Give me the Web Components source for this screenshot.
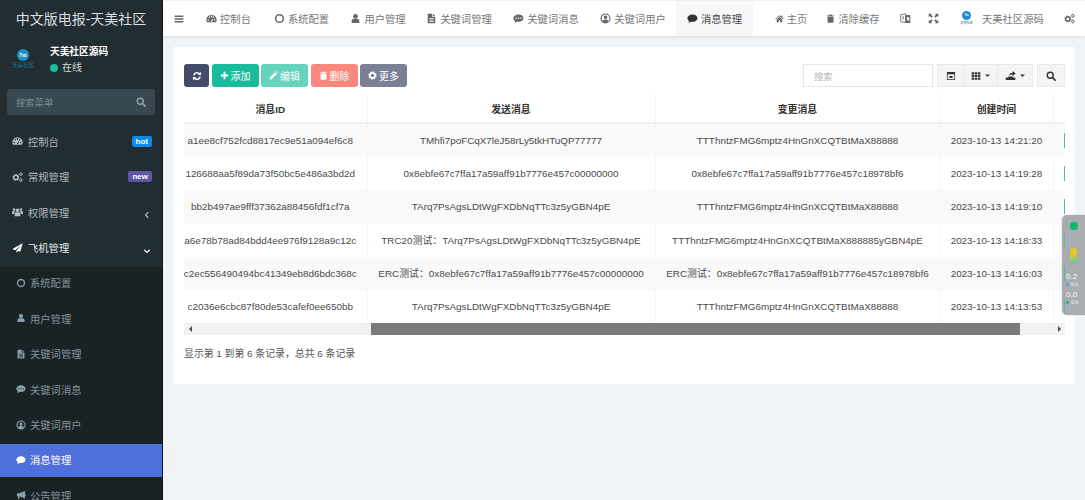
<!DOCTYPE html>
<html lang="zh">
<head>
<meta charset="utf-8">
<title>消息管理</title>
<style>
  html, body { margin: 0; height: 100%; overflow: hidden; }
  body {
    font-family: "Liberation Sans", "Noto Sans CJK SC", sans-serif;
    font-size: 10.3px;
    background: #f1f4f6;
    display: grid;
    grid-template-columns: 163px 1fr;
    height: 500px;
  }
  main-area { min-width: 0; }
</style>
</head>
<body>
<app-sidebar></app-sidebar>
<main-area></main-area>
<net-widget></net-widget>

<script>
const gear = (x, y, r, c = 'currentColor') => {
  const t = r * 0.42
  const len = 2 * Math.PI * (r - t / 2)
  return `<circle cx="${x}" cy="${y}" r="${r * 0.62}" fill="none" stroke="${c}" stroke-width="${r * 0.42}"/>
    <circle cx="${x}" cy="${y}" r="${r - t / 2}" fill="none" stroke="${c}" stroke-width="${t}" stroke-dasharray="${len / 16} ${len / 16}"/>`
}

const icons = {
  dashboard: '<path fill-rule="evenodd" d="M8 2.5a7.5 7.5 0 0 0-7.5 7.5c0 1.4.4 2.6 1 3.5h13c.6-.9 1-2.1 1-3.5A7.5 7.5 0 0 0 8 2.5zM3.2 9a1 1 0 1 0 .01 0zM5 5a1 1 0 1 0 .01 0zM8 3.8a1 1 0 1 0 .01 0zM12.8 9a1 1 0 1 0 .01 0zM11 5a1 1 0 1 0 .01 0zM7 11.5a1.2 1.2 0 0 0 2.2.5l1.6-5.5-2.6 4.1a1.2 1.2 0 0 0-1.2.9z"/>',
  cogs: gear(5.6, 8.6, 5) + gear(12.8, 4, 2.8) + gear(12.8, 12.4, 2.8),
  group: '<circle cx="8" cy="5.6" r="2.6"/><path d="M3.8 14V10.6c0-1.6 1.2-2.3 2.2-2.3h4c1 0 2.2.7 2.2 2.3V14z"/><circle cx="3" cy="4.4" r="1.9"/><circle cx="13" cy="4.4" r="1.9"/><path d="M0 11V8.4C0 7 1 6.6 1.8 6.6h2.4c.2 1-.1 1.3-1 2.4V11zM16 11V8.4C16 7 15 6.6 14.2 6.6h-2.4c-.2 1 .1 1.3 1 2.4V11z"/>',
  send: '<path d="M15.5 1 .5 9.4l4.2 1.7L13 4 6.4 12v3l2.4-2.8 3.3 1.4z"/>',
  circle: '<circle cx="8" cy="8" r="5.6" fill="none" stroke="currentColor" stroke-width="2.2"/>',
  user: '<circle cx="8" cy="4.8" r="3.4"/><path d="M2.4 14.5v-3c0-2 1.4-3.3 3-3.3h5.2c1.6 0 3 1.3 3 3.3v3z"/>',
  file: '<path fill-rule="evenodd" d="M2.5 1H9v4.5h4.5V15h-11zM10 1.2 13.3 4.5H10zM4.8 7.6v1h6.4v-1zM4.8 9.8v1h6.4v-1zM4.8 12v1h6.4v-1z"/>',
  commenting: '<path fill-rule="evenodd" d="M8 2C3.9 2 .6 4.5.6 7.6c0 1.7 1 3.2 2.5 4.2-.2.9-.7 1.7-1.3 2.4 1.3-.1 2.7-.7 3.7-1.6.7.2 1.5.3 2.3.3 4.1 0 7.4-2.2 7.4-5.3S12.1 2 8 2zM4.5 6.6a1 1 0 1 0 .01 0zM8 6.6a1 1 0 1 0 .01 0zM11.5 6.6a1 1 0 1 0 .01 0z"/>',
  comment: '<path d="M8 2C3.9 2 .6 4.5.6 7.6c0 1.7 1 3.2 2.5 4.2-.2.9-.7 1.7-1.3 2.4 1.3-.1 2.7-.7 3.7-1.6.7.2 1.5.3 2.3.3 4.1 0 7.4-2.2 7.4-5.3S12.1 2 8 2z"/>',
  usercircle: '<circle cx="8" cy="8" r="6.5" fill="none" stroke="currentColor" stroke-width="1.7"/><circle cx="8" cy="6.3" r="2.5"/><path d="M3.5 12.5c.4-2.3 2-3.2 4.5-3.2s4.1.9 4.5 3.2C11.3 13.8 9.8 14.5 8 14.5s-3.3-.7-4.5-2z"/>',
  bullhorn: '<path d="M14.5 1.5 5 5H1.5v5H3l1 4.5h2L5.2 10l9.3 3.5zM15 6v3.5c.8-.3 1-1 1-1.7S15.8 6.3 15 6z"/>',
  refresh: '<path fill="none" stroke="currentColor" stroke-width="2.3" d="M2.8 7a5.4 5.4 0 0 1 9.5-2.2M13.2 9a5.4 5.4 0 0 1-9.5 2.2"/><path d="M14.5 1.2v5.3H9.3zM1.5 14.8V9.5h5.2z"/>',
  plus: '<path d="M6.3 1.5h3.4v4.8h4.8v3.4H9.7v4.8H6.3V9.7H1.5V6.3h4.8z"/>',
  pencil: '<path d="M1 15l1-4.3L10.8 2l3.2 3.2L5.3 14zM11.8 1l.7-.4c.5-.3 1-.2 1.4.2l1.3 1.3c.4.4.4 1 .1 1.4l-.4.6z"/>',
  trash: '<path d="M6 1h4l.7 1.5H14.5V4.2h-13V2.5h3.8zM2.7 5h10.6v9.2c0 .8-.6 1.3-1.3 1.3H4c-.7 0-1.3-.5-1.3-1.3z"/>',
  cog: gear(8, 8, 7.4),
  bars: '<path d="M1 2.5h14v2.2H1zM1 6.9h14v2.2H1zM1 11.3h14v2.2H1z"/>',
  home: '<path d="M8 2 .5 8.4l.9 1L8 3.9l6.6 5.5.9-1L13 6.3V2.5h-2v2.1zM3 9.7V14.5h3.8v-3.5h2.4v3.5H13V9.7L8 5.5z"/>',
  language: '<path d="M1 2.5 8 1v13L1 12.5z" fill="none" stroke="currentColor" stroke-width="1.2"/><path d="M8 3h7v11.5H8z"/><path d="M10 6h3.4v5H10z" fill="#fff"/><path d="M3 6h3M4.5 5v5" stroke="currentColor"/>',
  arrows: '<path d="M1 1h5L4.4 2.6 6.9 5.1 5.1 6.9 2.6 4.4 1 6zM15 1v5L13.4 4.4 10.9 6.9 9.1 5.1 11.6 2.6 10 1zM1 15v-5L2.6 11.6 5.1 9.1 6.9 10.9 4.4 13.4 6 15zM15 15h-5L11.6 13.4 9.1 10.9 10.9 9.1 13.4 11.6 15 10z"/>',
  search: '<circle cx="6.8" cy="6.8" r="4.8" fill="none" stroke="currentColor" stroke-width="2.2"/><path d="M10.2 10.2l4.3 4.3" stroke="currentColor" stroke-width="2.6" stroke-linecap="round"/>',
  table: '<path fill-rule="evenodd" d="M1.5 1.5h13v13h-13zM2.7 5v8.3h10.6V5zM5.5 8h5v3h-5z"/>',
  th: '<path d="M1 2h4v3.4H1zM6 2h4v3.4H6zM11 2h4v3.4h-4zM1 6.3h4v3.4H1zM6 6.3h4v3.4H6zM11 6.3h4v3.4h-4zM1 10.6h4V14H1zM6 10.6h4V14H6zM11 10.6h4V14h-4z"/>',
  export: '<path d="M1 11h3l1.200-1.500h5.600L12 11h3v3.500H1zM6 8.500c0-3 2-4.500 5-4.500V1.500l4.500 3.700L11 9V6.500c-2.200 0-3.800.6-5 2z"/>',
  caret: '<path d="M2.5 5.5h11L8 11.5z"/>',
  left: '<path d="M10.5 2.5 5 8l5.5 5.5" fill="none" stroke="currentColor" stroke-width="2.2"/>',
  down: '<path d="M2.5 5.5 8 11l5.5-5.5" fill="none" stroke="currentColor" stroke-width="2.2"/>'
}

// small icon, size comes from the size attribute
class FaIcon extends HTMLElement {
  constructor(){
    super()
    const size = this.getAttribute('size') || 11
    this.attachShadow({ mode: 'open' })
    this.shadowRoot.innerHTML = `
      <style>:host{display:inline-flex;flex:none;align-items:center;justify-content:center} svg{display:block;fill:currentColor}</style>
      <svg width="${size}" height="${size}" viewBox="0 0 16 16">${icons[this.getAttribute('name')] || ''}</svg>`
  }
}
customElements.define('fa-icon', FaIcon)

// the round logo, used twice
class BrandLogo extends HTMLElement {
  constructor(){
    super()
    const small = this.hasAttribute('small')
    this.attachShadow({ mode: 'open' })
    this.shadowRoot.innerHTML = `
      <style>
        :host{display:inline-flex;flex-direction:column;align-items:center;flex:none}
        .c{width:${small ? 9 : 12}px;height:${small ? 9 : 12}px;border-radius:50%;background:#1f8fc4;color:#fff;
           font-size:${small ? 3 : 5}px;font-weight:700;display:flex;align-items:center;justify-content:center;line-height:1}
        .t{font-size:${small ? 3.2 : 5.5}px;line-height:1;margin-top:2px;color:#1c6f93;white-space:nowrap}
      </style>
      <div class="c">7m</div><div class="t">天美社区</div>`
  }
}
customElements.define('brand-logo', BrandLogo)

const sideTpl = document.createElement('template')
sideTpl.innerHTML = `
<style>
  :host { display:block; height:500px; overflow:hidden; background:#222d32; color:#b4bfc4; border-right:1px solid #0f1518; box-sizing:border-box; }
  .title { height:36px; display:flex; align-items:center; justify-content:center; color:#d9dee0; font-size:14px; }
  .user { height:53px; display:flex; }
  .user .logo { width:50px; padding-right:4px; box-sizing:border-box; display:flex; justify-content:center; padding-top:13px; }
  .user .info { padding-top:9px; color:#fff; }
  .user b { display:block; font-size:9.7px; line-height:13px; }
  .online { display:flex; align-items:center; gap:4px; margin-top:3px; font-size:10px; line-height:13px; color:#d4dadc; }
  .online i { width:8px; height:8px; border-radius:50%; background:#18bc9c; }
  .search { margin:0 7px; height:26px; border-radius:3px; background:#374850; color:#7d8d94; display:flex; align-items:center; justify-content:space-between; padding:0 9px; font-size:9.3px; }
  .search fa-icon { color:#93a2a8; }
  .menu { margin-top:10.9px; }
  .sub { background:#1a2226; }
</style>
<div class="title">中文版电报-天美社区</div>
<div class="user">
  <div class="logo"><brand-logo></brand-logo></div>
  <div class="info"><b>天美社区源码</b><div class="online"><i></i>在线</div></div>
</div>
<div class="search"><span>搜索菜单</span><fa-icon name="search" size="10"></fa-icon></div>
<div class="menu">
  <side-item icon="dashboard" badge="hot" badge-color="#0e8ae8">控制台</side-item>
  <side-item icon="cogs" badge="new" badge-color="#5f56a6">常规管理</side-item>
  <side-item icon="group" arrow="left">权限管理</side-item>
  <side-item icon="send" arrow="down" strong>飞机管理</side-item>
  <div class="sub">
    <side-item sub icon="circle">系统配置</side-item>
    <side-item sub icon="user">用户管理</side-item>
    <side-item sub icon="file">关键词管理</side-item>
    <side-item sub icon="commenting">关键词消息</side-item>
    <side-item sub icon="usercircle">关键词用户</side-item>
    <side-item sub icon="comment" active>消息管理</side-item>
    <side-item sub icon="bullhorn">公告管理</side-item>
  </div>
</div>`

class AppSidebar extends HTMLElement {
  constructor(){
    super()
    this.attachShadow({ mode: 'open' })
    this.shadowRoot.appendChild(sideTpl.content.cloneNode(true))
  }
}

class SideItem extends HTMLElement {
  constructor(){
    super()
    this.attachShadow({ mode: 'open' })
    const sub = this.hasAttribute('sub')
    const badge = this.getAttribute('badge')
    const arrow = this.getAttribute('arrow')
    const strong = this.hasAttribute('strong')
    const active = this.hasAttribute('active')
    this.shadowRoot.innerHTML = `
      <style>
        :host { display:block; height:35.4px; }
        a { height:33px; padding:0 10px 2px ${sub ? 15 : 12}px; box-sizing:border-box; display:flex; align-items:center; gap:${sub ? 4 : 5}px;
            color:${active ? '#fff' : strong ? '#e4e9eb' : sub ? '#84929a' : '#aeb9be'}; background:${active ? '#4e6fdc' : 'none'}; }
        fa-icon { width:11px; color:${active ? '#fff' : sub ? '#8aa0aa' : strong ? '#fff' : '#b4bfc4'}; }
        fa-icon.arrow { margin-top:6px; }
        .txt { flex:1; white-space:nowrap; }
        .badge { color:#fff; font-size:8px; font-weight:700; line-height:11px; padding:0 4px; border-radius:2px; }
      </style>
      <a>
        <fa-icon name="${this.getAttribute('icon')}" size="${sub ? 10 : 12}"></fa-icon>
        <span class="txt"><slot></slot></span>
        ${badge ? `<span class="badge" style="background:${this.getAttribute('badge-color')}">${badge}</span>` : ''}
        ${arrow ? `<fa-icon class="arrow" name="${arrow}" size="8"></fa-icon>` : ''}
      </a>`
  }
}

const mainTpl = document.createElement('template')
mainTpl.innerHTML = `
<style>
  :host { display:block; height:500px; }
  .top { height:36px; background:#fff; border-top:1px solid #eef0f2; box-sizing:border-box; box-shadow:0 1px 3px rgba(0,0,0,.1); display:flex; align-items:stretch; }
  .ham { width:31px; display:flex; align-items:center; justify-content:center; color:#666; }
  .links { display:flex; flex:1; }
  .right { display:flex; padding-right:4px; }
  .panel { margin:11px 10px 0; height:337px; background:#fff; padding:17px 10px 0 11px; box-sizing:border-box; }
</style>
<div class="top">
  <div class="ham"><fa-icon name="bars" size="10"></fa-icon></div>
  <div class="links">
    <nav-link icon="dashboard" w="69">控制台</nav-link>
    <nav-link icon="circle" w="77">系统配置</nav-link>
    <nav-link icon="user" w="76">用户管理</nav-link>
    <nav-link icon="file" w="86">关键词管理</nav-link>
    <nav-link icon="commenting" w="88">关键词消息</nav-link>
    <nav-link icon="usercircle" w="86">关键词用户</nav-link>
    <nav-link icon="comment" w="77" current>消息管理</nav-link>
  </div>
  <div class="right">
    <nav-link icon="home" size="9" w="66">主页</nav-link>
    <nav-link icon="trash" size="9" w="58">清除缓存</nav-link>
    <nav-link icon="language" w="28" style="margin-left:9px"></nav-link>
    <nav-link icon="arrows" w="28"></nav-link>
    <nav-link logo w="110">天美社区源码</nav-link>
    <nav-link icon="cogs" w="24"></nav-link>
  </div>
</div>
<div class="panel">
  <tool-bar></tool-bar>
  <msg-table></msg-table>
</div>`

class MainArea extends HTMLElement {
  constructor(){
    super()
    this.attachShadow({ mode: 'open' })
    this.shadowRoot.appendChild(mainTpl.content.cloneNode(true))
  }
}

class NavLink extends HTMLElement {
  constructor(){
    super()
    this.attachShadow({ mode: 'open' })
    const cur = this.hasAttribute('current')
    const logo = this.hasAttribute('logo')
    const size = this.getAttribute('size') || 11
    this.shadowRoot.innerHTML = `
      <style>
        :host { display:flex; align-items:center; justify-content:center; gap:${logo ? 9 : 3}px; width:${this.getAttribute('w')}px; flex:none;
                color:${cur ? '#444' : '#777'}; background:${cur ? '#f7f7f7' : 'none'}; white-space:nowrap; }
        fa-icon { color:${cur ? '#333' : '#666'}; }
      </style>
      ${logo ? '<brand-logo small></brand-logo>' : `<fa-icon name="${this.getAttribute('icon')}" size="${size}"></fa-icon>`}
      <slot></slot>`
  }
}

const barTpl = document.createElement('template')
barTpl.innerHTML = `
<style>
  :host { display:flex; height:23px; align-items:stretch; }
  .btn { display:flex; align-items:center; justify-content:center; gap:2px; width:47px; margin-right:2.5px; border-radius:3px; color:#fff; font-size:10px; }
  .ref { width:25px; background:#444c69; }
  .add { background:#18bc9c; }
  .edit { background:#66d3bd; }
  .del { background:#f8877d; }
  .more { background:#7b8096; margin-right:0; }
  .grow { flex:1; }
  .input { width:130px; border:1px solid #e6e6e6; box-sizing:border-box; color:#b5b5b5; font-size:9.3px; display:flex; align-items:center; padding-left:10px; margin-right:4px; }
  .grp { display:flex; margin-right:4px; }
  .gb { display:flex; align-items:center; justify-content:center; gap:3px; background:#f4f4f4; border:1px solid #eaeaea; box-sizing:border-box; color:#333; }
  .gb + .gb { border-left:0; }
</style>
<div class="btn ref"><fa-icon name="refresh" size="10"></fa-icon></div>
<div class="btn add"><fa-icon name="plus" size="9"></fa-icon>添加</div>
<div class="btn edit"><fa-icon name="pencil" size="9"></fa-icon>编辑</div>
<div class="btn del"><fa-icon name="trash" size="9"></fa-icon>删除</div>
<div class="btn more"><fa-icon name="cog" size="9"></fa-icon>更多</div>
<div class="grow"></div>
<div class="input">搜索</div>
<div class="grp">
  <div class="gb" style="width:27px"><fa-icon name="table" size="10"></fa-icon></div>
  <div class="gb" style="width:34px"><fa-icon name="th" size="10"></fa-icon><fa-icon name="caret" size="7"></fa-icon></div>
  <div class="gb" style="width:35px"><fa-icon name="export" size="11"></fa-icon><fa-icon name="caret" size="7"></fa-icon></div>
</div>
<div class="gb" style="width:28px"><fa-icon name="search" size="10"></fa-icon></div>`

class ToolBar extends HTMLElement {
  constructor(){
    super()
    this.attachShadow({ mode: 'open' })
    this.shadowRoot.appendChild(barTpl.content.cloneNode(true))
  }
}

const rows = [
  ['a1ee8cf752fcd8817ec9e51a094ef6c8', 'TMhfi7poFCqX7leJ58rLy5tkHTuQP77777', 'TTThntzFMG6mptz4HnGnXCQTBtMaX88888', '2023-10-13 14:21:20'],
  ['126688aa5f89da73f50bc5e486a3bd2d', '0x8ebfe67c7ffa17a59aff91b7776e457c00000000', '0x8ebfe67c7ffa17a59aff91b7776e457c18978bf6', '2023-10-13 14:19:28'],
  ['bb2b497ae9fff37362a88456fdf1cf7a', 'TArq7PsAgsLDtWgFXDbNqTTc3z5yGBN4pE', 'TTThntzFMG6mptz4HnGnXCQTBtMaX88888', '2023-10-13 14:19:10'],
  ['a6e78b78ad84bdd4ee976f9128a9c12c', 'TRC20测试：TArq7PsAgsLDtWgFXDbNqTTc3z5yGBN4pE', 'TTThntzFMG6mptz4HnGnXCQTBtMaX888885yGBN4pE', '2023-10-13 14:18:33'],
  ['c2ec556490494bc41349eb8d6bdc368c', 'ERC测试：0x8ebfe67c7ffa17a59aff91b7776e457c00000000', 'ERC测试：0x8ebfe67c7ffa17a59aff91b7776e457c18978bf6', '2023-10-13 14:16:03'],
  ['c2036e6cbc87f80de53cafef0ee650bb', 'TArq7PsAgsLDtWgFXDbNqTTc3z5yGBN4pE', 'TTThntzFMG6mptz4HnGnXCQTBtMaX88888', '2023-10-13 14:13:53']
]

class MsgTable extends HTMLElement {
  constructor(){
    super()
    this.attachShadow({ mode: 'open' })
    const body = rows.map(r => `<tr>${r.map(c => `<td>${c}</td>`).join('')}<td class="op"><i></i></td></tr>`).join('')
    this.shadowRoot.innerHTML = `
      <style>
        :host { display:block; margin-top:8px; color:#333; }
        .clip { overflow:hidden; }
        table { border-collapse:collapse; table-layout:fixed; width:1080px; margin-left:-10px; font-size:9.9px; }
        th { height:27px; padding:0; font-weight:700; border-bottom:2px solid #f1f1f1; border-right:1px solid #f4f4f4; color:#333; }
        td { height:33.2px; padding:0; text-align:center; white-space:nowrap; border-right:1px solid #f6f6f6; color:#4a4a4a; }
        tr:nth-child(odd) td { background:#f9f9f9; }
        .op { text-align:left; padding-left:10px; }
        .op i { display:block; position:relative; z-index:2; width:1px; height:15px; background:#4dbfa6; }
        .bar { height:12px; background:#f1f1f1; display:flex; align-items:stretch; color:#444; }
        .bar span { width:12px; flex:none; display:flex; align-items:center; justify-content:center; }
        .bar i { display:block; width:0; height:0; border:3px solid transparent; }
        .gap1 { width:175px; flex:none; }
        .thumb { width:649px; background:#7b7b7b; flex:none; }
        .gap2 { flex:1; }
        .info { margin-top:12px; line-height:14px; font-size:9.9px; color:#555; }
      </style>
      <div class="clip">
        <table>
          <colgroup><col style="width:193px"><col style="width:288px"><col style="width:285px"><col style="width:113px"><col style="width:201px"></colgroup>
          <thead><tr><th>消息ID</th><th>发送消息</th><th>变更消息</th><th>创建时间</th><th></th></tr></thead>
          <tbody>${body}</tbody>
        </table>
      </div>
      <div class="bar">
        <span><i style="border-right-color:#444;border-left-width:0"></i></span>
        <div class="gap1"></div><div class="thumb"></div><div class="gap2"></div>
        <span><i style="border-left-color:#444;border-right-width:0"></i></span>
      </div>
      <div class="info">显示第 1 到第 6 条记录，总共 6 条记录</div>`
  }
}

// floating speed widget, lies over the table
class NetWidget extends HTMLElement {
  constructor(){
    super()
    this.attachShadow({ mode: 'open' })
    this.shadowRoot.innerHTML = `
      <style>
        :host { position:absolute; z-index:1; left:1062px; top:215px; width:23px; height:100px; background:#a9acb0; border-radius:5px 0 0 5px;
                box-shadow:0 0 2px rgba(0,0,0,.2); color:#fff; display:flex; flex-direction:column; align-items:center; padding-top:7px; box-sizing:border-box; }
        .dot { width:8px; height:8px; border-radius:50%; background:#0fb56d; flex:none; }
        .light { width:7px; height:15px; margin-top:18px; border-radius:3px; flex:none; background:linear-gradient(#e6c62a 0 40%, #58d19a 100%); }
        .sp { margin-top:10px; font-size:8px; line-height:8px; width:15px; }
        .sp + .sp { margin-top:3px; }
        .k { display:flex; align-items:center; gap:2px; font-size:5px; line-height:7px; opacity:.85; }
        .k i { width:3px; height:3px; border-radius:50%; }
      </style>
      <div class="dot"></div>
      <div class="light"></div>
      <div class="sp">0.2<div class="k"><i style="background:#3aa6e8"></i>K/s</div></div>
      <div class="sp">0.0<div class="k"><i style="background:#12b76a"></i>K/s</div></div>`
  }
}

customElements.define('side-item', SideItem)
customElements.define('app-sidebar', AppSidebar)
customElements.define('nav-link', NavLink)
customElements.define('tool-bar', ToolBar)
customElements.define('msg-table', MsgTable)
customElements.define('main-area', MainArea)
customElements.define('net-widget', NetWidget)
</script>
</body>
</html>
